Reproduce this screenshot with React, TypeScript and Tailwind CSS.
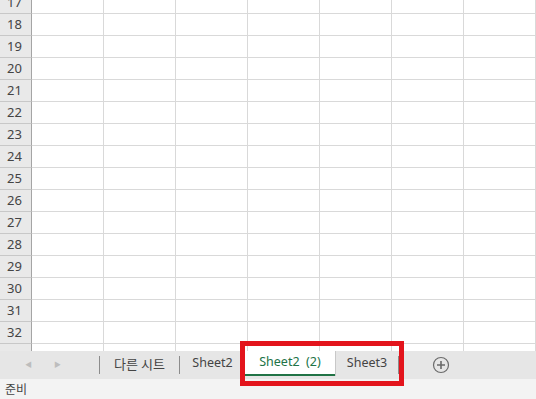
const rows = Array.from({ length: 17 }, (_, i) => 17 + i);
const cols = Array.from({ length: 7 }, (_, i) => i);

function PlusCircle() {
  return (
    <svg width="18" height="18" viewBox="0 0 18 18" fill="none">
      <circle cx="9" cy="9" r="7.5" stroke="#6b6b6b" strokeWidth="1.2" />
      <path d="M9 5v8M5 9h8" stroke="#6b6b6b" strokeWidth="1.6" />
    </svg>
  );
}

export default function App() {
  return (
    <div
      className="relative w-[536px] h-[399px] overflow-hidden bg-white flex flex-col"
      style={{ fontFamily: '"Noto Sans", "Noto Sans CJK KR", sans-serif' }}
    >
      {/* grid */}
      <div className="h-[351px] overflow-hidden shrink-0">
        <div className="-mt-[8px]">
          {rows.map((r) => (
            <div key={r} className="flex h-[22px]">
              <div className="w-[32px] shrink-0 bg-[#e9e9e9] border-r border-r-[#a5a5a5] border-b border-b-[#c8c8c8] flex items-center justify-center text-[13px] text-[#444] pr-[2px]">
                {r < 33 ? r : ''}
              </div>
              {cols.map((c) => (
                <div key={c} className="w-[72px] shrink-0 border-r border-b border-[#d9d9d9]" />
              ))}
            </div>
          ))}
        </div>
      </div>

      {/* sheet tabs */}
      <div className="h-[28px] shrink-0 bg-[#e6e6e6] flex items-start text-[12.5px] text-[#444]">
        <div className="w-[99px] h-full flex items-center">
          <span className="ml-[25px] text-[7px] text-[#bdbdbd]">◀</span>
          <span className="ml-[22px] text-[7px] text-[#bdbdbd]">▶</span>
        </div>
        <div className="w-px h-[18px] mt-[5px] bg-[#8c8c8c]" />
        <div className="w-[79px] h-[25px] flex items-center justify-center text-[13px]" style={{ fontFamily: '"Noto Sans CJK KR", sans-serif' }}>
          다른 시트
        </div>
        <div className="w-px h-[18px] mt-[5px] bg-[#8c8c8c]" />
        <div className="w-[65px] h-[25px] flex items-center justify-center">Sheet2</div>
        <div className="w-[90px] h-[25px] bg-white border-b-2 border-[#217346] flex items-center justify-center text-[#217346]">
          Sheet2&nbsp;&nbsp;(2)
        </div>
        <div className="w-[63px] h-[25px] border-l border-[#c8c8c8] flex items-center justify-center">Sheet3</div>
        <div className="w-px h-[18px] mt-[5px] bg-[#8c8c8c]" />
        <div className="ml-[33px] h-[28px] flex items-center">
          <PlusCircle />
        </div>
      </div>

      {/* status bar */}
      <div
        className="flex-1 bg-[#f3f3f3] flex items-center pl-[5px] text-[12px] text-[#444]"
        style={{ fontFamily: '"Noto Sans CJK KR", sans-serif' }}
      >
        준비
      </div>

      {/* annotation */}
      <div className="absolute left-[240px] top-[341px] w-[164px] h-[45px] border-[5px] border-[#e3141c]" />
    </div>
  );
}
